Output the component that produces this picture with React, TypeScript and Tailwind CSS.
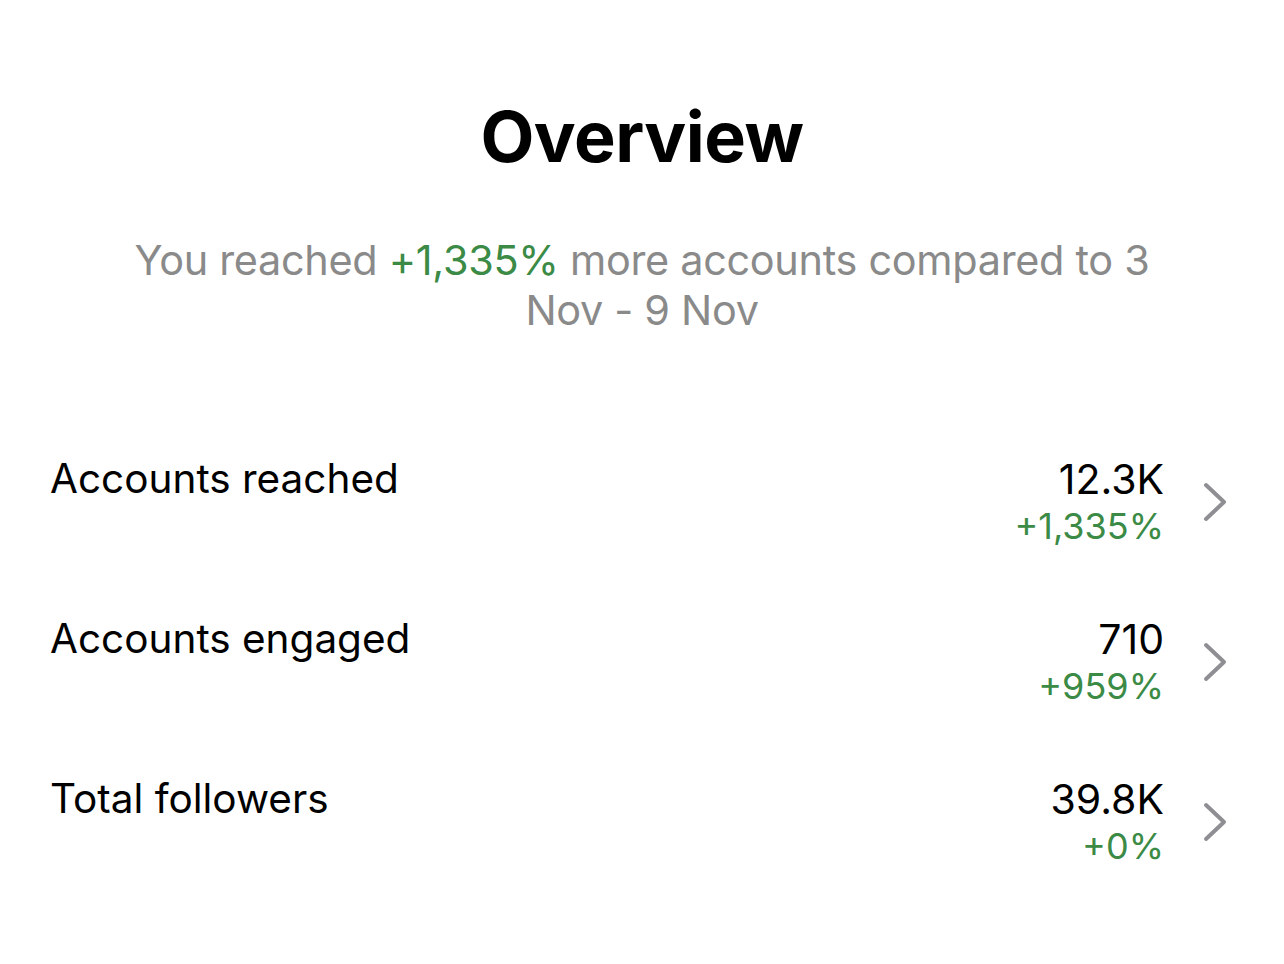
import React from 'react';

const rows = [
  { label: 'Accounts reached', value: '12.3K', change: '+1,335%' },
  { label: 'Accounts engaged', value: '710', change: '+959%' },
  { label: 'Total followers', value: '39.8K', change: '+0%' },
];

function Chevron() {
  return (
    <svg width="26" height="40" viewBox="0 0 26 40" fill="none" className="shrink-0">
      <path d="M4 3 L22 20 L4 37" stroke="#8e8e93" strokeWidth="4" strokeLinecap="round" strokeLinejoin="round" />
    </svg>
  );
}

export default function App() {
  return (
    <div className="w-[1284px] h-[964px] bg-white text-black font-['Inter',sans-serif] overflow-hidden">
      <div className="pt-[97px] flex flex-col items-center">
        <h1 className="text-[70px] leading-[80px] font-bold tracking-[-0.5px]">Overview</h1>
        <p className="mt-[58px] w-[1060px] text-center text-[41.4px] leading-[50px] tracking-[-0.3px] text-[#8a8a8a]">
          You reached <span className="text-[#3b8a45]">+1,335%</span> more accounts compared to 3 Nov - 9 Nov
        </p>
      </div>

      <div className="mt-[120px] pl-[50px] pr-[56px] flex flex-col gap-[52px]">
        {rows.map((r) => (
          <div key={r.label} className="flex items-start justify-between h-[108px]">
            <div className="text-[40.5px] leading-[48px]">{r.label}</div>
            <div className="flex items-center gap-[38px]">
              <div className="flex flex-col items-end">
                <div className="text-[41px] leading-[48px]">{r.value}</div>
                <div className="text-[36px] leading-[46px] text-[#3b8a45]">{r.change}</div>
              </div>
              <Chevron />
            </div>
          </div>
        ))}
      </div>
    </div>
  );
}
